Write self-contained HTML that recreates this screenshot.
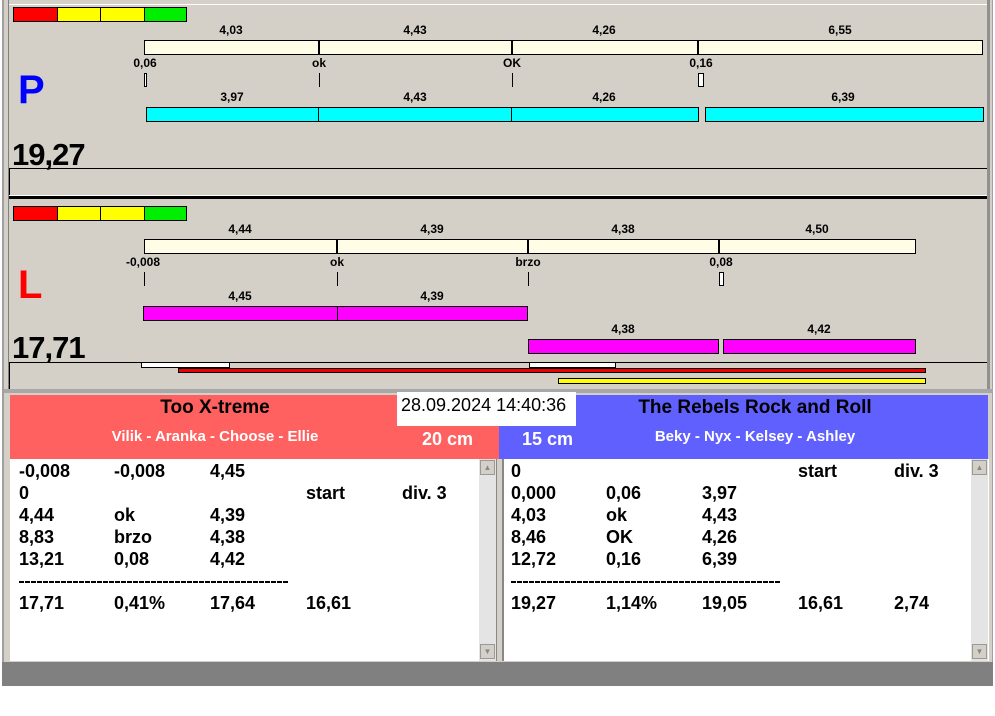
<!DOCTYPE html>
<html><head><meta charset="utf-8"><style>
*{margin:0;padding:0;box-sizing:border-box}
body{width:995px;height:716px;background:#fff;position:relative;overflow:hidden;font-family:"Liberation Sans",Arial,sans-serif;font-weight:bold}
.a{position:absolute}
.b{position:absolute;border:1px solid #000}
.t{position:absolute;font-size:12px;transform:translateX(-50%);white-space:nowrap}
.r{position:absolute;font-size:18px;white-space:nowrap}
.d{position:absolute;height:2px;width:269px;background:repeating-linear-gradient(90deg,#000 0 5px,transparent 5px 6px)}
</style></head><body>
<div class="a" style="left:2px;top:0;width:991px;height:686px;background:#d4d0c8;border-left:2px solid #a0a0a0;border-right:1px solid #a0a0a0"></div>
<div class="a" style="left:2px;top:662px;width:991px;height:24px;background:#808080"></div>
<div class="a" style="left:8px;top:0;width:1px;height:390px;background:#808080"></div>
<div class="a" style="left:987px;top:0;width:3px;height:390px;background:#909090"></div>
<div class="a" style="left:9px;top:4px;width:978px;height:1px;background:#fff"></div>

<div class="b" style="left:13px;top:7px;width:45px;height:15px;background:#f00"></div>
<div class="b" style="left:57px;top:7px;width:44px;height:15px;background:#ff0"></div>
<div class="b" style="left:100px;top:7px;width:45px;height:15px;background:#ff0"></div>
<div class="b" style="left:144px;top:7px;width:43px;height:15px;background:#0e0"></div>
<div class="t" style="left:231px;top:23px">4,03</div><div class="t" style="left:415px;top:23px">4,43</div><div class="t" style="left:604px;top:23px">4,26</div><div class="t" style="left:840px;top:23px">6,55</div>
<div class="b" style="left:144px;top:40px;width:839px;height:15px;background:#fffde6"></div>
<div class="a" style="left:318px;top:40px;width:2px;height:15px;background:#000"></div><div class="a" style="left:511px;top:40px;width:2px;height:15px;background:#000"></div><div class="a" style="left:697px;top:40px;width:2px;height:15px;background:#000"></div>
<div class="t" style="left:145px;top:56px">0,06</div><div class="t" style="left:319px;top:56px">ok</div><div class="t" style="left:512px;top:56px">OK</div><div class="t" style="left:701px;top:56px">0,16</div>
<div class="b" style="left:144px;top:73px;width:3px;height:14px;background:#fff"></div>
<div class="a" style="left:319px;top:73px;width:1px;height:14px;background:#000"></div><div class="a" style="left:512px;top:73px;width:1px;height:14px;background:#000"></div>
<div class="b" style="left:698px;top:73px;width:6px;height:14px;background:#fff"></div>
<div class="a" style="left:18px;top:68px;font-size:40px;color:#0000ff">P</div>
<div class="t" style="left:232px;top:90px">3,97</div><div class="t" style="left:415px;top:90px">4,43</div><div class="t" style="left:604px;top:90px">4,26</div><div class="t" style="left:843px;top:90px">6,39</div>
<div class="b" style="left:146px;top:107px;width:173px;height:15px;background:#0ff"></div><div class="b" style="left:318px;top:107px;width:194px;height:15px;background:#0ff"></div><div class="b" style="left:511px;top:107px;width:188px;height:15px;background:#0ff"></div><div class="b" style="left:705px;top:107px;width:279px;height:15px;background:#0ff"></div>
<div class="a" style="left:12px;top:137px;font-size:31px;letter-spacing:-1px">19,27</div>
<div class="a" style="left:9px;top:168px;width:978px;height:1px;background:#000"></div>
<div class="a" style="left:9px;top:168px;width:1px;height:28px;background:#000"></div>
<div class="a" style="left:9px;top:195px;width:978px;height:1px;background:#fff"></div>
<div class="a" style="left:9px;top:196px;width:978px;height:3px;background:#000"></div>

<div class="b" style="left:13px;top:206px;width:45px;height:15px;background:#f00"></div>
<div class="b" style="left:57px;top:206px;width:44px;height:15px;background:#ff0"></div>
<div class="b" style="left:100px;top:206px;width:45px;height:15px;background:#ff0"></div>
<div class="b" style="left:144px;top:206px;width:43px;height:15px;background:#0e0"></div>
<div class="t" style="left:240px;top:222px">4,44</div><div class="t" style="left:432px;top:222px">4,39</div><div class="t" style="left:623px;top:222px">4,38</div><div class="t" style="left:817px;top:222px">4,50</div>
<div class="b" style="left:144px;top:239px;width:772px;height:15px;background:#fffde6"></div>
<div class="a" style="left:336px;top:239px;width:2px;height:15px;background:#000"></div><div class="a" style="left:527px;top:239px;width:2px;height:15px;background:#000"></div><div class="a" style="left:718px;top:239px;width:2px;height:15px;background:#000"></div>
<div class="t" style="left:143px;top:255px">-0,008</div><div class="t" style="left:337px;top:255px">ok</div><div class="t" style="left:528px;top:255px">brzo</div><div class="t" style="left:721px;top:255px">0,08</div>
<div class="a" style="left:144px;top:272px;width:1px;height:14px;background:#000"></div><div class="a" style="left:337px;top:272px;width:1px;height:14px;background:#000"></div><div class="a" style="left:528px;top:272px;width:1px;height:14px;background:#000"></div>
<div class="b" style="left:719px;top:272px;width:5px;height:14px;background:#fff"></div>
<div class="a" style="left:18px;top:263px;font-size:40px;color:#f00">L</div>
<div class="t" style="left:240px;top:289px">4,45</div><div class="t" style="left:432px;top:289px">4,39</div>
<div class="b" style="left:143px;top:306px;width:195px;height:15px;background:#f0f"></div><div class="b" style="left:337px;top:306px;width:191px;height:15px;background:#f0f"></div>
<div class="t" style="left:623px;top:322px">4,38</div><div class="t" style="left:819px;top:322px">4,42</div>
<div class="b" style="left:528px;top:339px;width:191px;height:15px;background:#f0f"></div><div class="b" style="left:723px;top:339px;width:193px;height:15px;background:#f0f"></div>
<div class="a" style="left:12px;top:330px;font-size:31px;letter-spacing:-1px">17,71</div>
<div class="a" style="left:9px;top:362px;width:978px;height:1px;background:#000"></div>
<div class="a" style="left:9px;top:362px;width:1px;height:28px;background:#000"></div>
<div class="b" style="left:141px;top:362px;width:89px;height:6px;background:#fff"></div>
<div class="b" style="left:529px;top:362px;width:87px;height:6px;background:#fff"></div>
<div class="b" style="left:178px;top:368px;width:748px;height:5px;background:#e00"></div>
<div class="b" style="left:558px;top:378px;width:368px;height:6px;background:#ff0"></div>
<div class="a" style="left:4px;top:389px;width:989px;height:4px;background:#a8a8a8"></div>

<div class="a" style="left:10px;top:395px;width:489px;height:64px;background:#ff6060"></div>
<div class="a" style="left:499px;top:395px;width:489px;height:64px;background:#6060ff"></div>
<div class="a" style="left:397px;top:392px;width:179px;height:34px;background:#fff;font-weight:normal;font-size:18px;padding:3px 0 0 4px">28.09.2024 14:40:36</div>
<div class="a" style="left:10px;top:397px;width:410px;text-align:center;font-size:19px">Too X-treme</div>
<div class="a" style="left:10px;top:428px;width:410px;text-align:center;font-size:15px;color:#fff">Vilik - Aranka - Choose - Ellie</div>
<div class="a" style="left:422px;top:429px;font-size:18px;color:#fff">20 cm</div>
<div class="a" style="left:522px;top:429px;font-size:18px;color:#fff">15 cm</div>
<div class="a" style="left:590px;top:397px;width:330px;text-align:center;font-size:19px">The Rebels Rock and Roll</div>
<div class="a" style="left:630px;top:428px;width:250px;text-align:center;font-size:15px;color:#fff">Beky - Nyx - Kelsey - Ashley</div>

<div class="a" style="left:10px;top:459px;width:487px;height:202px;background:#fff;border-right:1px solid #888"></div>
<div class="a" style="left:502px;top:459px;width:487px;height:202px;background:#fff;border-left:2px solid #888"></div>
<div class="a" style="left:479px;top:459px;width:17px;height:202px;background:#e4e4e4"></div>
<div class="a" style="left:971px;top:459px;width:17px;height:202px;background:#e4e4e4"></div>
<div class="a" style="left:480px;top:460px;width:15px;height:15px;background:#d4d0c8;border:1px solid #999;font-size:8px;color:#888;text-align:center;line-height:13px">▲</div>
<div class="a" style="left:480px;top:644px;width:15px;height:15px;background:#d4d0c8;border:1px solid #999;font-size:8px;color:#888;text-align:center;line-height:13px">▼</div>
<div class="a" style="left:972px;top:460px;width:15px;height:15px;background:#d4d0c8;border:1px solid #999;font-size:8px;color:#888;text-align:center;line-height:13px">▲</div>
<div class="a" style="left:972px;top:644px;width:15px;height:15px;background:#d4d0c8;border:1px solid #999;font-size:8px;color:#888;text-align:center;line-height:13px">▼</div>

<div class="r" style="left:19px;top:461px">-0,008</div><div class="r" style="left:114px;top:461px">-0,008</div><div class="r" style="left:210px;top:461px">4,45</div>
<div class="r" style="left:19px;top:483px">0</div><div class="r" style="left:306px;top:483px">start</div><div class="r" style="left:402px;top:483px">div. 3</div>
<div class="r" style="left:19px;top:505px">4,44</div><div class="r" style="left:114px;top:505px">ok</div><div class="r" style="left:210px;top:505px">4,39</div>
<div class="r" style="left:19px;top:527px">8,83</div><div class="r" style="left:114px;top:527px">brzo</div><div class="r" style="left:210px;top:527px">4,38</div>
<div class="r" style="left:19px;top:549px">13,21</div><div class="r" style="left:114px;top:549px">0,08</div><div class="r" style="left:210px;top:549px">4,42</div>
<div class="d" style="left:19px;top:581px"></div>
<div class="r" style="left:19px;top:593px">17,71</div><div class="r" style="left:114px;top:593px">0,41%</div><div class="r" style="left:210px;top:593px">17,64</div><div class="r" style="left:306px;top:593px">16,61</div>

<div class="r" style="left:511px;top:461px">0</div><div class="r" style="left:798px;top:461px">start</div><div class="r" style="left:894px;top:461px">div. 3</div>
<div class="r" style="left:511px;top:483px">0,000</div><div class="r" style="left:606px;top:483px">0,06</div><div class="r" style="left:702px;top:483px">3,97</div>
<div class="r" style="left:511px;top:505px">4,03</div><div class="r" style="left:606px;top:505px">ok</div><div class="r" style="left:702px;top:505px">4,43</div>
<div class="r" style="left:511px;top:527px">8,46</div><div class="r" style="left:606px;top:527px">OK</div><div class="r" style="left:702px;top:527px">4,26</div>
<div class="r" style="left:511px;top:549px">12,72</div><div class="r" style="left:606px;top:549px">0,16</div><div class="r" style="left:702px;top:549px">6,39</div>
<div class="d" style="left:511px;top:581px"></div>
<div class="r" style="left:511px;top:593px">19,27</div><div class="r" style="left:606px;top:593px">1,14%</div><div class="r" style="left:702px;top:593px">19,05</div><div class="r" style="left:798px;top:593px">16,61</div><div class="r" style="left:894px;top:593px">2,74</div>
</body></html>
